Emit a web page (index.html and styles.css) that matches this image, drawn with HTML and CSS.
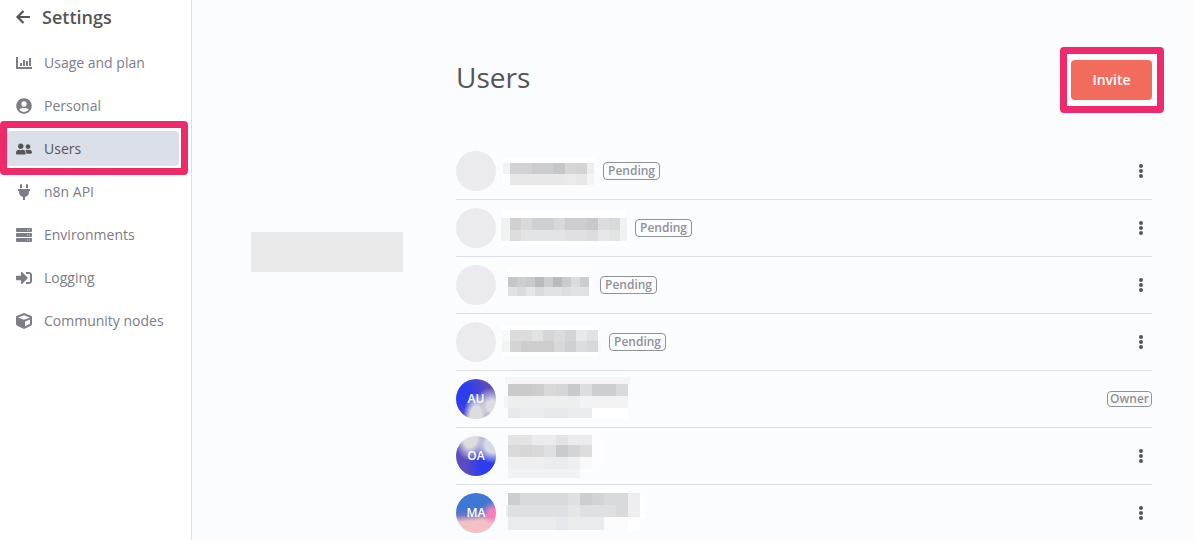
FILE: index.html
```html
<!DOCTYPE html>
<html lang="en">
<head>
    <meta charset="UTF-8">
    <meta name="viewport" content="width=device-width, initial-scale=1.0">
    <title>Settings - Users</title>
    <link rel="stylesheet" href="styles.css">
</head>
<body>
    <div class="app">
        <aside class="sidebar">
            <a class="back" href="#">
                <svg class="back-icon" viewBox="0 0 16 16" aria-hidden="true"><path d="M8.500 2 2.500 8l6 6M3 8h12" fill="none" stroke="currentColor" stroke-width="2.200"/></svg>
                Settings
            </a>
            <nav class="menu">
                <a class="item" href="#">
                    <svg class="icon" viewBox="0 0 16 16" aria-hidden="true"><path d="M0 2h2v10h14v2H0zM4 8h2v3H4zM7 5h2v6H7zM10 6h2v5h-2zM13 3h2v8h-2z"/></svg>
                    Usage and plan
                </a>
                <a class="item" href="#">
                    <svg class="icon" viewBox="0 0 496 512" aria-hidden="true"><path d="M248 8C111 8 0 119 0 256s111 248 248 248 248-111 248-248S385 8 248 8zm0 96c48.600 0 88 39.400 88 88s-39.400 88-88 88-88-39.400-88-88 39.400-88 88-88zm0 344c-58.700 0-111.300-26.600-146.500-68.200 18.800-35.400 55.600-59.800 98.500-59.800 2.400 0 4.800.4 7.100 1.100 13 4.200 26.600 6.900 40.900 6.900 14.300 0 28-2.700 40.900-6.900 2.300-.7 4.700-1.100 7.100-1.100 42.900 0 79.700 24.400 98.500 59.800C359.300 421.400 306.700 448 248 448z"/></svg>
                    Personal
                </a>
                <a class="item active framed" href="#" aria-current="page">
                    <svg class="icon" viewBox="0 0 640 512" aria-hidden="true"><path d="M192 256c61.900 0 112-50.100 112-112S253.900 32 192 32 80 82.100 80 144s50.100 112 112 112zm76.800 32h-8.300c-20.800 10-43.900 16-68.500 16s-47.600-6-68.500-16h-8.300C51.600 288 0 339.600 0 403.200V432c0 26.500 21.500 48 48 48h288c26.500 0 48-21.500 48-48v-28.800c0-63.600-51.600-115.200-115.200-115.200zM480 256c53 0 96-43 96-96s-43-96-96-96-96 43-96 96 43 96 96 96zm48 32h-3.800c-13.900 4.800-28.600 8-44.200 8s-30.300-3.200-44.200-8H432c-20.400 0-39.200 5.900-55.700 15.400 24.400 26.300 39.700 61.200 39.700 99.800v38.400c0 2.200-.5 4.300-.6 6.400H592c26.500 0 48-21.500 48-48 0-61.900-50.100-112-112-112z"/></svg>
                    Users
                </a>
                <a class="item" href="#">
                    <svg class="icon" viewBox="0 0 384 512" aria-hidden="true"><path d="M320 32a32 32 0 0 0-64 0v96h64zm48 128H16a16 16 0 0 0-16 16v32a16 16 0 0 0 16 16h16v32a160.100 160.100 0 0 0 128 156.800V512h64v-99.200A160.100 160.100 0 0 0 352 256v-32h16a16 16 0 0 0 16-16v-32a16 16 0 0 0-16-16zM128 32a32 32 0 0 0-64 0v96h64z"/></svg>
                    n8n API
                </a>
                <a class="item" href="#">
                    <svg class="icon" viewBox="0 0 16 16" aria-hidden="true"><path d="M1 1h14a1 1 0 0 1 1 1v2a1 1 0 0 1-1 1H1a1 1 0 0 1-1-1V2a1 1 0 0 1 1-1zM1 6h14a1 1 0 0 1 1 1v2a1 1 0 0 1-1 1H1a1 1 0 0 1-1-1V7a1 1 0 0 1 1-1zM1 11h14a1 1 0 0 1 1 1v2a1 1 0 0 1-1 1H1a1 1 0 0 1-1-1v-2a1 1 0 0 1 1-1z"/><path fill="#d5d5d9" d="M11 2.500h1v1h-1zM13 2.500h1v1h-1zM11 7.500h1v1h-1zM13 7.500h1v1h-1zM11 12.500h1v1h-1zM13 12.500h1v1h-1z"/></svg>
                    Environments
                </a>
                <a class="item" href="#">
                    <svg class="icon" viewBox="0 0 512 512" aria-hidden="true"><path d="M416 448h-84c-6.600 0-12-5.400-12-12v-40c0-6.600 5.400-12 12-12h84c17.700 0 32-14.300 32-32V160c0-17.700-14.300-32-32-32h-84c-6.600 0-12-5.400-12-12V76c0-6.600 5.400-12 12-12h84c53 0 96 43 96 96v192c0 53-43 96-96 96zm-47-209L201 71c-15-15-41-4.500-41 17v96H24c-13.300 0-24 10.700-24 24v96c0 13.300 10.700 24 24 24h136v96c0 21.500 26 32 41 17l168-168c9.300-9.400 9.300-24.600 0-34z"/></svg>
                    Logging
                </a>
                <a class="item" href="#">
                    <svg class="icon" viewBox="0 0 512 512" aria-hidden="true"><path d="M239.100 6.300l-208 78c-18.700 7-31.100 25-31.100 45v225.100c0 18.200 10.300 34.800 26.500 42.900l208 104c13.500 6.800 29.400 6.800 42.900 0l208-104c16.300-8.100 26.500-24.800 26.500-42.900V129.300c0-20-12.400-37.900-31.100-44.900l-208-78C262 2.200 250 2.200 239.100 6.300zM256 68.400l192 72v1.100l-192 78-192-78v-1.100l192-72zm32 356V275.500l160-65v133.900l-160 80z"/></svg>
                    Community nodes
                </a>
            </nav>
        </aside>

        <main class="main">
            <div class="placeholder"></div>
            <section class="content">
                <header class="header">
                    <h1>Users</h1>
                    <div class="invite framed">
                        <button class="invite-button" type="button">Invite</button>
                    </div>
                </header>
                <ul class="users">
                    <li class="user">
                        <span class="avatar"></span>
                        <svg class="redacted" width="95" height="48" aria-hidden="true">
                            <path fill="#fff" d="M3 10h91v28H3z"/>
                            <path fill="#f2f2f3" d="M3 16h7v11H3z"/>
                            <path fill="#d2d2d4" d="M10 16h22v11H10z"/>
                            <path fill="#cbccce" d="M32 16h22v11H32z"/>
                            <path fill="#c5c6c8" d="M54 16h11v11H54z"/>
                            <path fill="#d6d6d7" d="M65 16h11v11H65z"/>
                            <path fill="#d3d4d6" d="M76 16h11v11H76z"/>
                            <path fill="#ededed" d="M87 16h7v11h-7z"/>
                            <path fill="#e8e8e9" d="M10 27h77v11H10z"/>
                            <path fill="#ebebeb" d="M65 27h11v11H65z"/>
                            <path fill="#f4f4f4" d="M87 27h7v11h-7z"/>
                        </svg>
                        <span class="badge pending">Pending</span>
                        <button class="more" type="button" aria-label="Actions"><svg width="4" height="14" viewBox="0 0 4 14"><circle cx="2" cy="2" r="2"/><circle cx="2" cy="7" r="2"/><circle cx="2" cy="12" r="2"/></svg></button>
                    </li>
                    <li class="user">
                        <span class="avatar"></span>
                        <svg class="redacted" width="127" height="48" aria-hidden="true">
                            <path fill="#fff" d="M1 7h127v35H1z"/>
                            <path fill="#f1f2f2" d="M1 14h127v23H1z"/>
                            <path fill="#d0d0d1" d="M10 14h11v12H10z"/>
                            <path fill="#d8d9da" d="M21 14h11v12H21z"/>
                            <path fill="#cfd0d1" d="M32 14h22v12H32z"/>
                            <path fill="#d7d8da" d="M54 14h11v12H54z"/>
                            <path fill="#cdcdcf" d="M65 14h22v12H65z"/>
                            <path fill="#c8c8ca" d="M87 14h11v12H87z"/>
                            <path fill="#dcdddf" d="M98 14h11v12H98z"/>
                            <path fill="#d8d9db" d="M109 14h11v12h-11z"/>
                            <path fill="#dcdcdc" d="M10 26h11v11H10z"/>
                            <path fill="#e3e4e5" d="M21 26h44v11H21z"/>
                            <path fill="#e0e0e2" d="M65 26h22v11H65z"/>
                            <path fill="#dcdcde" d="M87 26h11v11H87z"/>
                            <path fill="#e7e7e9" d="M98 26h11v11H98z"/>
                            <path fill="#e3e3e4" d="M109 26h11v11h-11z"/>
                        </svg>
                        <span class="badge pending">Pending</span>
                        <button class="more" type="button" aria-label="Actions"><svg width="4" height="14" viewBox="0 0 4 14"><circle cx="2" cy="2" r="2"/><circle cx="2" cy="7" r="2"/><circle cx="2" cy="12" r="2"/></svg></button>
                    </li>
                    <li class="user">
                        <span class="avatar"></span>
                        <svg class="redacted" width="92" height="48" aria-hidden="true">
                            <path fill="#fff" d="M8 9h86v26H8z"/>
                            <path fill="#c6c7c9" d="M8 16h9v10H8z"/>
                            <path fill="#cdcecf" d="M17 16h9v10h-9z"/>
                            <path fill="#c9cacc" d="M26 16h9v10h-9z"/>
                            <path fill="#babbbd" d="M35 16h9v10h-9z"/>
                            <path fill="#cccdce" d="M44 16h9v10h-9z"/>
                            <path fill="#b9babc" d="M53 16h9v10h-9z"/>
                            <path fill="#cacbcd" d="M62 16h9v10h-9z"/>
                            <path fill="#dadbdd" d="M71 16h9v10h-9z"/>
                            <path fill="#cccdcf" d="M80 16h9v10h-9z"/>
                            <path fill="#e1e2e3" d="M8 26h81v9H8z"/>
                            <path fill="#dadbdd" d="M17 26h9v9h-9zM35 26h9v9h-9z"/>
                            <path fill="#e6e7e9" d="M26 26h9v9h-9z"/>
                            <path fill="#dddee0" d="M62 26h9v9h-9z"/>
                        </svg>
                        <span class="badge pending">Pending</span>
                        <button class="more" type="button" aria-label="Actions"><svg width="4" height="14" viewBox="0 0 4 14"><circle cx="2" cy="2" r="2"/><circle cx="2" cy="7" r="2"/><circle cx="2" cy="12" r="2"/></svg></button>
                    </li>
                    <li class="user">
                        <span class="avatar"></span>
                        <svg class="redacted" width="101" height="48" aria-hidden="true">
                            <path fill="#fff" d="M2 7h96v31H2z"/>
                            <path fill="#f7f8f8" d="M2 12h8v11H2z"/>
                            <path fill="#f3f3f4" d="M2 23h8v11H2z"/>
                            <path fill="#f8f8f9" d="M98 23h3v11h-3z"/>
                            <path fill="#dcdcdc" d="M10 12h22v11H10z"/>
                            <path fill="#e0e3e1" d="M32 12h11v11H32z"/>
                            <path fill="#d5d6d8" d="M43 12h11v11H43z"/>
                            <path fill="#dbdbdc" d="M54 12h11v11H54z"/>
                            <path fill="#d3d4d6" d="M65 12h11v11H65z"/>
                            <path fill="#e8e9eb" d="M76 12h11v11H76z"/>
                            <path fill="#e2e2e4" d="M87 12h11v11H87z"/>
                            <path fill="#d4d4d5" d="M10 23h11v11H10z"/>
                            <path fill="#cdcdce" d="M21 23h33v11H21z"/>
                            <path fill="#d7d8d9" d="M54 23h11v11H54z"/>
                            <path fill="#cfd0d1" d="M65 23h11v11H65z"/>
                            <path fill="#dcdddf" d="M76 23h11v11H76z"/>
                            <path fill="#d7d8da" d="M87 23h11v11H87z"/>
                        </svg>
                        <span class="badge pending">Pending</span>
                        <button class="more" type="button" aria-label="Actions"><svg width="4" height="14" viewBox="0 0 4 14"><circle cx="2" cy="2" r="2"/><circle cx="2" cy="7" r="2"/><circle cx="2" cy="12" r="2"/></svg></button>
                    </li>
                    <li class="user">
                        <span class="avatar avatar-au">AU</span>
                        <svg class="redacted" width="150" height="48" aria-hidden="true">
                            <path fill="#f5f5f7" d="M5 2h125v7H5z"/>
                            <path fill="#cacaca" d="M8 9h24v12H8z"/>
                            <path fill="#cdcdce" d="M32 9h12v12H32z"/>
                            <path fill="#d9d9da" d="M44 9h12v12H44z"/>
                            <path fill="#d5d6d7" d="M56 9h12v12H56z"/>
                            <path fill="#c8c9ca" d="M68 9h12v12H68z"/>
                            <path fill="#dcdddf" d="M80 9h12v12H80z"/>
                            <path fill="#cdced0" d="M92 9h24v12H92z"/>
                            <path fill="#d9dadc" d="M116 9h12v12h-12z"/>
                            <path fill="#f3f3f3" d="M4 21h124v12H4z"/>
                            <path fill="#eeeeef" d="M8 21h72v12H8z"/>
                            <path fill="#ebecee" d="M8 33h84v10H8z"/>
                            <path fill="#e8e9ed" d="M8 33h12v10H8zM44 33h24v10H44z"/>
                            <path fill="#fff" d="M92 33h36v10H92z"/>
                        </svg>
                        <span class="badge owner">Owner</span>
                    </li>
                    <li class="user">
                        <span class="avatar avatar-oa">OA</span>
                        <svg class="redacted" width="150" height="48" aria-hidden="true">
                            <path fill="#fdfdff" d="M92 3h12v34H92z"/>
                            <path fill="#ebebed" d="M8 3h84v10H8z"/>
                            <path fill="#e3e3e4" d="M8 3h24v10H8zM56 3h12v10H56z"/>
                            <path fill="#d9dada" d="M8 13h12v12H8z"/>
                            <path fill="#d6d6d6" d="M20 13h12v12H20z"/>
                            <path fill="#d8d9d9" d="M32 13h12v12H32z"/>
                            <path fill="#dfe0e3" d="M44 13h12v12H44z"/>
                            <path fill="#cacbcd" d="M56 13h12v12H56z"/>
                            <path fill="#d3d4d4" d="M68 13h12v12H68z"/>
                            <path fill="#dcdcdc" d="M80 13h12v12H80z"/>
                            <path fill="#efeff2" d="M8 25h72v12H8z"/>
                            <path fill="#ebecef" d="M44 25h24v12H44z"/>
                            <path fill="#f9f9f9" d="M80 25h12v12H80z"/>
                            <path fill="#f1f2f5" d="M8 37h72v9H8z"/>
                        </svg>
                        <button class="more" type="button" aria-label="Actions"><svg width="4" height="14" viewBox="0 0 4 14"><circle cx="2" cy="2" r="2"/><circle cx="2" cy="7" r="2"/><circle cx="2" cy="12" r="2"/></svg></button>
                    </li>
                    <li class="user">
                        <span class="avatar avatar-ma">MA</span>
                        <svg class="redacted" width="150" height="48" aria-hidden="true">
                            <path fill="#fff" d="M8 1h120v3H8zM128 28h12v13h-12zM140 4h6v24h-6z"/>
                            <path fill="#d9dadc" d="M8 4h120v12H8z"/>
                            <path fill="#cccdce" d="M8 4h12v12H8zM80 4h12v12H80z"/>
                            <path fill="#dfe0e2" d="M68 4h12v12H68z"/>
                            <path fill="#d2d3d4" d="M92 4h12v12H92z"/>
                            <path fill="#eeeef1" d="M128 4h12v24h-12zM6 16h2v12H6z"/>
                            <path fill="#dfe0e1" d="M8 16h108v12H8z"/>
                            <path fill="#e6e6e8" d="M68 16h12v12H68z"/>
                            <path fill="#d9dada" d="M116 16h12v12h-12z"/>
                            <path fill="#eaebed" d="M8 28h96v13H8z"/>
                            <path fill="#e7e8ed" d="M56 28h12v13H56z"/>
                            <path fill="#fcfcfc" d="M104 28h24v13h-24z"/>
                        </svg>
                        <button class="more" type="button" aria-label="Actions"><svg width="4" height="14" viewBox="0 0 4 14"><circle cx="2" cy="2" r="2"/><circle cx="2" cy="7" r="2"/><circle cx="2" cy="12" r="2"/></svg></button>
                    </li>
                </ul>
            </section>
        </main>
    </div>
</body>
</html>
```
FILE: styles.css
```css
* {
    box-sizing: border-box;
}
body {
    margin: 0;
    font-family: "Open Sans", sans-serif;
    font-size: 14px;
    color: #555;
}
button {
    font-family: inherit;
    border: none;
    cursor: pointer;
}
.app {
    display: flex;
    height: 100vh;
    overflow: hidden;
}

/* sidebar */
.sidebar {
    flex: 0 0 192px;
    background-color: #fff;
    border-right: 1px solid #dbdfe7;
}
.back {
    display: flex;
    align-items: center;
    gap: 11px;
    height: 34px;
    padding-left: 15px;
    font-size: 18px;
    font-weight: 600;
    color: #555;
    text-decoration: none;
}
.back-icon {
    width: 16px;
    height: 16px;
}
.menu {
    display: flex;
    flex-direction: column;
    gap: 8px;
    padding: 11px 12px 0 7px;
}
.item {
    display: flex;
    align-items: center;
    gap: 12px;
    height: 35px;
    padding-left: 9px;
    border-radius: 4px;
    color: #7d7d87;
    text-decoration: none;
}
.item.active {
    background-color: #dbdfe7;
    color: #555;
}
.icon {
    width: 16px;
    height: 16px;
    fill: currentColor;
}

/* pink frame around the highlighted controls */
.framed {
    position: relative;
}
.framed::after {
    content: "";
    position: absolute;
    inset: -10px -9px -9px -7px;
    border: 7px solid #ee2a6b;
    border-radius: 4px;
    pointer-events: none;
}
.invite.framed::after {
    inset: -13px -12px -13px -11px;
}

/* main */
.main {
    flex: 1;
    display: flex;
    align-items: flex-start;
    gap: 53px;
    padding: 60px 42px 0 59px;
    background-color: #fbfcfe;
}
.placeholder {
    flex: 0 0 152px;
    height: 40px;
    margin-top: 172px;
    background-color: #eaeaea;
}
.content {
    flex: 1;
}
.header {
    display: flex;
    align-items: flex-start;
    justify-content: space-between;
    margin-bottom: 43px;
}
h1 {
    margin: 0;
    font-size: 28px;
    font-weight: 400;
    line-height: 34px;
}
.invite-button {
    display: block;
    min-width: 81px;
    height: 40px;
    padding: 0 20px 2px;
    border-radius: 4px;
    background-color: #f16c5c;
    color: #fff;
    font-size: 14px;
    font-weight: 600;
}

/* user list */
.users {
    margin: 0;
    padding: 0;
    list-style: none;
}
.user {
    display: flex;
    align-items: center;
    height: 57px;
    border-bottom: 1px solid #dbdfe7;
}
.avatar {
    display: flex;
    align-items: center;
    justify-content: center;
    width: 40px;
    height: 40px;
    padding-bottom: 2px;
    border-radius: 50%;
    background-color: #ebebef;
    color: #fff;
    font-size: 12px;
    font-weight: 600;
}
.avatar-au {
    background: radial-gradient(circle at 90% 68%, #dddddf 12%, transparent 42%), radial-gradient(ellipse at 50% 100%, #dcdddf 22%, transparent 46%), radial-gradient(circle at 15% 38%, #2c3df0 20%, transparent 60%), #5a4bc0;
}
.avatar-oa {
    background: radial-gradient(ellipse at 35% 0%, #dddddf 20%, transparent 44%), radial-gradient(circle at 92% 22%, #d6dbe3 16%, transparent 38%), radial-gradient(circle at 82% 75%, #2c3df0 20%, transparent 52%), #5a4bc0;
}
.avatar-ma {
    background: radial-gradient(circle at 92% 50%, #f77dbb 8%, transparent 28%), linear-gradient(175deg, #3f78d4 38%, #6a74c4 52%, #f3c0c4 68%);
}
.redacted {
    margin: 0 8px 0 4px;
    shape-rendering: crispEdges;
}
.badge {
    border: 1px solid #909298;
    border-radius: 4px;
    color: #909298;
    font-size: 12px;
    font-weight: 600;
    line-height: 16px;
}
.pending {
    padding: 0 4px;
}
.owner {
    margin-left: auto;
    padding: 0 2px;
    line-height: 14px;
}
.more {
    display: flex;
    margin-left: auto;
    padding: 8px 9px;
    background: none;
    fill: #555;
}
```
